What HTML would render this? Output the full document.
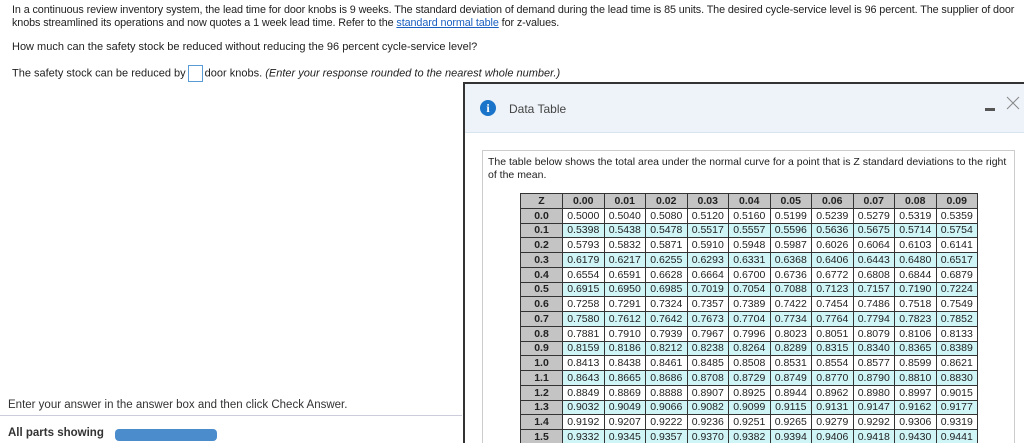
<!DOCTYPE html>
<html><head><meta charset="utf-8"><style>
html,body{margin:0;width:1024px;height:443px;overflow:hidden}
body{background:#fff;font-family:"Liberation Sans",Arial,sans-serif;position:relative;color:#222}
.t{position:absolute;font-size:11px;left:12px;white-space:nowrap;line-height:13px}
a{color:#1a5fc0;text-decoration:underline}
.box{display:inline-block;width:13px;height:15px;border:1px solid #5b9bd5;vertical-align:middle;margin:0 2px}
#dlg{position:absolute;left:463px;top:82px;width:561px;height:361px;overflow:hidden;border-left:2px solid #333;border-top:2px solid #333;background:#fff;box-sizing:border-box}
#hd{position:absolute;left:0;top:0;right:0;height:48px;background:#eef3f9;border-bottom:1px solid #d8e4ee}
#inner{position:absolute;left:17px;top:66px;width:531px;height:300px;border:1px solid #ccc}
table{position:absolute;left:55px;top:109px;border-collapse:collapse;font-size:10.5px;table-layout:fixed;width:458px}
tr{height:14.75px}
td{border:1px solid #333;padding:0;text-align:center;line-height:12px}
td.z,tr.h td{background:#c4c4c4;font-weight:bold}
tr.c td{background:#cff5f7}
tr.c td.z{background:#c4c4c4}
</style></head><body>
<div class="t" style="top:4px;font-size:10.8px;letter-spacing:-0.1px">In a continuous review inventory system, the lead time for door knobs is 9 weeks. The standard deviation of demand during the lead time is 85 units. The desired cycle-service level is 96 percent. The supplier of door<br>knobs streamlined its operations and now quotes a 1 week lead time. Refer to the <a>standard normal table</a> for z-values.</div>
<div class="t" style="top:41px">How much can the safety stock be reduced without reducing the 96 percent cycle-service level?</div>
<div class="t" style="top:65px">The safety stock can be reduced by<span class="box"></span>door knobs. <i>(Enter your response rounded to the nearest whole number.)</i></div>
<div style="position:absolute;left:0;top:415px;width:462px;border-top:1px solid #ccd;"></div>
<div class="t" style="top:399px;left:8px;font-size:11.5px;color:#333">Enter your answer in the answer box and then click Check Answer.</div>
<div class="t" style="top:427px;left:8px;font-weight:bold;font-size:11.5px;color:#333">All parts showing</div>
<div style="position:absolute;left:115px;top:429px;width:102px;height:12px;border-radius:4px;background:#4a8ccc"></div>
<div id="dlg">
<div id="hd">
<div style="position:absolute;left:15px;top:16px;width:16px;height:16px;border-radius:50%;background:#1a74c9;color:#fff;font-weight:bold;font-size:12px;text-align:center;line-height:16px;font-family:'Liberation Serif',serif">i</div>
<div style="position:absolute;left:44px;top:18px;font-size:12px;color:#444">Data Table</div>
<div style="position:absolute;left:520px;top:24px;width:10px;height:3px;background:#555"></div>
<svg style="position:absolute;left:541px;top:12px" width="14" height="14"><path d="M1 1L13 13M13 1L1 13" stroke="#888" stroke-width="1"/></svg>
</div>
<div id="inner">
<div style="position:absolute;left:5px;top:5px;font-size:10.5px;line-height:13px;width:525px">The table below shows the total area under the normal curve for a point that is Z standard deviations to the right of the mean.</div>
</div>
<table>
<colgroup><col style="width:42px"><col span="10"></colgroup>
<tr class="h"><td class="z">Z</td><td>0.00</td><td>0.01</td><td>0.02</td><td>0.03</td><td>0.04</td><td>0.05</td><td>0.06</td><td>0.07</td><td>0.08</td><td>0.09</td></tr>
<tr><td class="z">0.0</td><td>0.5000</td><td>0.5040</td><td>0.5080</td><td>0.5120</td><td>0.5160</td><td>0.5199</td><td>0.5239</td><td>0.5279</td><td>0.5319</td><td>0.5359</td></tr>
<tr class="c"><td class="z">0.1</td><td>0.5398</td><td>0.5438</td><td>0.5478</td><td>0.5517</td><td>0.5557</td><td>0.5596</td><td>0.5636</td><td>0.5675</td><td>0.5714</td><td>0.5754</td></tr>
<tr><td class="z">0.2</td><td>0.5793</td><td>0.5832</td><td>0.5871</td><td>0.5910</td><td>0.5948</td><td>0.5987</td><td>0.6026</td><td>0.6064</td><td>0.6103</td><td>0.6141</td></tr>
<tr class="c"><td class="z">0.3</td><td>0.6179</td><td>0.6217</td><td>0.6255</td><td>0.6293</td><td>0.6331</td><td>0.6368</td><td>0.6406</td><td>0.6443</td><td>0.6480</td><td>0.6517</td></tr>
<tr><td class="z">0.4</td><td>0.6554</td><td>0.6591</td><td>0.6628</td><td>0.6664</td><td>0.6700</td><td>0.6736</td><td>0.6772</td><td>0.6808</td><td>0.6844</td><td>0.6879</td></tr>
<tr class="c"><td class="z">0.5</td><td>0.6915</td><td>0.6950</td><td>0.6985</td><td>0.7019</td><td>0.7054</td><td>0.7088</td><td>0.7123</td><td>0.7157</td><td>0.7190</td><td>0.7224</td></tr>
<tr><td class="z">0.6</td><td>0.7258</td><td>0.7291</td><td>0.7324</td><td>0.7357</td><td>0.7389</td><td>0.7422</td><td>0.7454</td><td>0.7486</td><td>0.7518</td><td>0.7549</td></tr>
<tr class="c"><td class="z">0.7</td><td>0.7580</td><td>0.7612</td><td>0.7642</td><td>0.7673</td><td>0.7704</td><td>0.7734</td><td>0.7764</td><td>0.7794</td><td>0.7823</td><td>0.7852</td></tr>
<tr><td class="z">0.8</td><td>0.7881</td><td>0.7910</td><td>0.7939</td><td>0.7967</td><td>0.7996</td><td>0.8023</td><td>0.8051</td><td>0.8079</td><td>0.8106</td><td>0.8133</td></tr>
<tr class="c"><td class="z">0.9</td><td>0.8159</td><td>0.8186</td><td>0.8212</td><td>0.8238</td><td>0.8264</td><td>0.8289</td><td>0.8315</td><td>0.8340</td><td>0.8365</td><td>0.8389</td></tr>
<tr><td class="z">1.0</td><td>0.8413</td><td>0.8438</td><td>0.8461</td><td>0.8485</td><td>0.8508</td><td>0.8531</td><td>0.8554</td><td>0.8577</td><td>0.8599</td><td>0.8621</td></tr>
<tr class="c"><td class="z">1.1</td><td>0.8643</td><td>0.8665</td><td>0.8686</td><td>0.8708</td><td>0.8729</td><td>0.8749</td><td>0.8770</td><td>0.8790</td><td>0.8810</td><td>0.8830</td></tr>
<tr><td class="z">1.2</td><td>0.8849</td><td>0.8869</td><td>0.8888</td><td>0.8907</td><td>0.8925</td><td>0.8944</td><td>0.8962</td><td>0.8980</td><td>0.8997</td><td>0.9015</td></tr>
<tr class="c"><td class="z">1.3</td><td>0.9032</td><td>0.9049</td><td>0.9066</td><td>0.9082</td><td>0.9099</td><td>0.9115</td><td>0.9131</td><td>0.9147</td><td>0.9162</td><td>0.9177</td></tr>
<tr><td class="z">1.4</td><td>0.9192</td><td>0.9207</td><td>0.9222</td><td>0.9236</td><td>0.9251</td><td>0.9265</td><td>0.9279</td><td>0.9292</td><td>0.9306</td><td>0.9319</td></tr>
<tr class="c"><td class="z">1.5</td><td>0.9332</td><td>0.9345</td><td>0.9357</td><td>0.9370</td><td>0.9382</td><td>0.9394</td><td>0.9406</td><td>0.9418</td><td>0.9430</td><td>0.9441</td></tr>
</table>
</div>
</body></html>
